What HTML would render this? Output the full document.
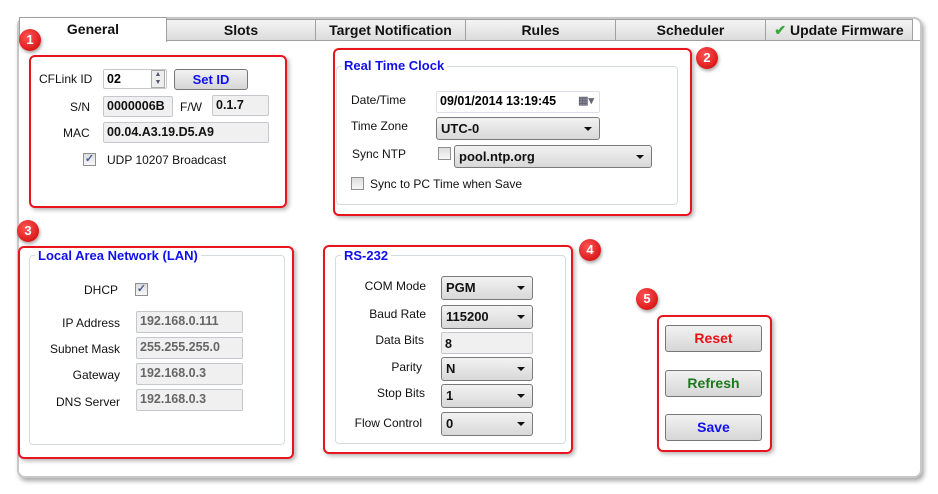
<!DOCTYPE html><html><head><style>
*{box-sizing:border-box;margin:0;padding:0}
body{width:938px;height:494px;background:#fff;font-family:"Liberation Sans",sans-serif;font-size:12px;color:#111;position:relative;overflow:hidden}
.a{position:absolute}
.win{left:17px;top:17px;width:905px;height:461px;border:2px solid #c8c8c8;border-radius:8px;background:#fff;box-shadow:2px 3px 5px rgba(0,0,0,.35)}
.tab{top:19px;height:22px;border:1px solid #a0a0a0;background:linear-gradient(#f4f4f4,#dcdcdc);font-weight:bold;font-size:14px;text-align:center;line-height:21px}
.red{border:2px solid #e8141e;border-radius:6px;box-shadow:2px 2px 4px rgba(0,0,0,.3)}
.badge{z-index:5;width:22px;height:22px;border-radius:50%;background:radial-gradient(circle at 40% 35%,#f55,#c00);color:#fff;font-weight:bold;font-size:13px;text-align:center;line-height:22px;box-shadow:1px 2px 3px rgba(0,0,0,.35)}
.gb{border:1px solid #d6dbe0;border-radius:4px}
.gt{background:#fff;color:#1010ee;font-weight:bold;font-size:13px;padding:0 3px;line-height:14px}
.lbl{font-size:12px;line-height:14px}
.in{border:1px solid #c4c8cc;background:#f0f0f0;font-weight:bold;font-size:12.5px;padding-left:3px;line-height:19px;border-radius:2px;white-space:nowrap;overflow:hidden}
.inw{background:#fff;color:#000}
.gr{color:#666}
.sel{border:1px solid #7a7a7a;border-radius:3px;background:linear-gradient(#f2f2f2,#d8d8d8);font-weight:bold;font-size:13px;padding-left:4px;line-height:21px}
.sel:after{content:"";position:absolute;right:7px;top:9px;border:4px solid transparent;border-top:4px solid #111;border-bottom:0}
.cb{width:13px;height:13px;border:1px solid #8e8f8f;background:linear-gradient(#ddd,#f7f7f7)}
.ck{color:#4a5a9a;font-size:11px;line-height:11px;text-align:center;font-weight:bold}
.btn{border:1px solid #777;border-radius:3px;background:linear-gradient(#f2f2f2,#d6d6d6);font-weight:bold;font-size:14px;text-align:center;line-height:24px}
</style></head><body>
<div class="a win"></div>
<div class="a" style="left:19px;top:17px;width:148px;height:25px;background:#fff;border:1px solid #a0a0a0;border-bottom:none;font-weight:bold;font-size:14px;text-align:center;line-height:22px;z-index:2">General</div>
<div class="a tab" style="left:166px;width:150px">Slots</div>
<div class="a tab" style="left:315px;width:151px">Target Notification</div>
<div class="a tab" style="left:465px;width:151px">Rules</div>
<div class="a tab" style="left:615px;width:151px">Scheduler</div>
<div class="a tab" style="left:765px;width:148px"><span style="color:#3aa83a">✔</span> Update Firmware</div>
<div class="a" style="left:19px;top:40px;width:901px;height:1px;background:#a0a0a0"></div>

<!-- box1 -->
<div class="a red" style="left:29px;top:55px;width:258px;height:153px"></div>
<div class="a lbl" style="left:39px;top:72px">CFLink ID</div>
<div class="a in inw" style="left:103px;top:69px;width:64px;height:20px">02</div>
<div class="a" style="left:151px;top:70px;width:14px;height:18px;border:1px solid #aaa;background:#eee;font-size:7px;line-height:8px;text-align:center;color:#557">▲<br>▼</div>
<div class="a btn" style="left:174px;top:69px;width:74px;height:21px;line-height:19px;color:#1010ee;font-size:13px">Set ID</div>
<div class="a lbl" style="left:70px;top:100px">S/N</div>
<div class="a in" style="left:103px;top:96px;width:70px;height:21px">0000006B</div>
<div class="a lbl" style="left:180px;top:100px">F/W</div>
<div class="a in" style="left:212px;top:95px;width:57px;height:21px">0.1.7</div>
<div class="a lbl" style="left:63px;top:126px">MAC</div>
<div class="a in" style="left:103px;top:122px;width:166px;height:21px">00.04.A3.19.D5.A9</div>
<div class="a cb ck" style="left:83px;top:153px">✓</div>
<div class="a lbl" style="left:107px;top:153px">UDP 10207 Broadcast</div>
<div class="a badge" style="left:19px;top:29px">1</div>

<!-- box2 -->
<div class="a red" style="left:333px;top:48px;width:359px;height:168px"></div>
<div class="a gb" style="left:336px;top:66px;width:342px;height:139px"></div>
<div class="a gt" style="left:341px;top:59px">Real Time Clock</div>
<div class="a lbl" style="left:351px;top:93px">Date/Time</div>
<div class="a in inw" style="left:436px;top:91px;width:164px;height:22px;border-color:#dde">09/01/2014 13:19:45<span style="position:absolute;right:5px;top:0;color:#667;font-size:11px">▦▾</span></div>
<div class="a lbl" style="left:351px;top:119px">Time Zone</div>
<div class="a sel" style="left:436px;top:117px;width:164px;height:23px">UTC-0</div>
<div class="a lbl" style="left:352px;top:147px">Sync NTP</div>
<div class="a cb" style="left:438px;top:147px"></div>
<div class="a sel" style="left:454px;top:145px;width:198px;height:23px">pool.ntp.org</div>
<div class="a cb" style="left:351px;top:177px"></div>
<div class="a lbl" style="left:370px;top:177px">Sync to PC Time when Save</div>
<div class="a badge" style="left:696px;top:47px">2</div>

<!-- box3 -->
<div class="a red" style="left:18px;top:246px;width:276px;height:213px"></div>
<div class="a gb" style="left:29px;top:255px;width:256px;height:190px"></div>
<div class="a gt" style="left:35px;top:249px">Local Area Network (LAN)</div>
<div class="a lbl" style="left:84px;top:283px">DHCP</div>
<div class="a cb ck" style="left:135px;top:283px">✓</div>
<div class="a lbl" style="left:0;top:316px;width:120px;text-align:right">IP Address</div>
<div class="a lbl" style="left:0;top:342px;width:120px;text-align:right">Subnet Mask</div>
<div class="a lbl" style="left:0;top:368px;width:120px;text-align:right">Gateway</div>
<div class="a lbl" style="left:0;top:395px;width:120px;text-align:right">DNS Server</div>
<div class="a in gr" style="left:136px;top:311px;width:107px;height:22px">192.168.0.111</div>
<div class="a in gr" style="left:136px;top:337px;width:107px;height:22px">255.255.255.0</div>
<div class="a in gr" style="left:136px;top:363px;width:107px;height:22px">192.168.0.3</div>
<div class="a in gr" style="left:136px;top:389px;width:107px;height:22px">192.168.0.3</div>
<div class="a badge" style="left:17px;top:220px">3</div>

<!-- box4 -->
<div class="a red" style="left:323px;top:245px;width:250px;height:209px"></div>
<div class="a gb" style="left:335px;top:255px;width:231px;height:189px"></div>
<div class="a gt" style="left:341px;top:249px">RS-232</div>
<div class="a lbl" style="left:330px;top:279px;width:96px;text-align:right">COM Mode</div>
<div class="a lbl" style="left:330px;top:307px;width:96px;text-align:right">Baud Rate</div>
<div class="a lbl" style="left:330px;top:333px;width:94px;text-align:right">Data Bits</div>
<div class="a lbl" style="left:330px;top:360px;width:92px;text-align:right">Parity</div>
<div class="a lbl" style="left:330px;top:386px;width:95px;text-align:right">Stop Bits</div>
<div class="a lbl" style="left:330px;top:416px;width:92px;text-align:right">Flow Control</div>
<div class="a sel" style="left:441px;top:276px;width:92px;height:24px">PGM</div>
<div class="a sel" style="left:441px;top:305px;width:92px;height:24px">115200</div>
<div class="a in" style="left:441px;top:332px;width:92px;height:22px;line-height:22px">8</div>
<div class="a sel" style="left:441px;top:357px;width:92px;height:24px">N</div>
<div class="a sel" style="left:441px;top:384px;width:92px;height:24px">1</div>
<div class="a sel" style="left:441px;top:412px;width:92px;height:24px">0</div>
<div class="a badge" style="left:579px;top:239px">4</div>

<!-- box5 -->
<div class="a red" style="left:657px;top:315px;width:115px;height:137px"></div>
<div class="a btn" style="left:665px;top:325px;width:97px;height:27px;color:#e81010">Reset</div>
<div class="a btn" style="left:665px;top:370px;width:97px;height:27px;color:#1a7a1a">Refresh</div>
<div class="a btn" style="left:665px;top:414px;width:97px;height:27px;color:#1010ee">Save</div>
<div class="a badge" style="left:636px;top:288px">5</div>
</body></html>
